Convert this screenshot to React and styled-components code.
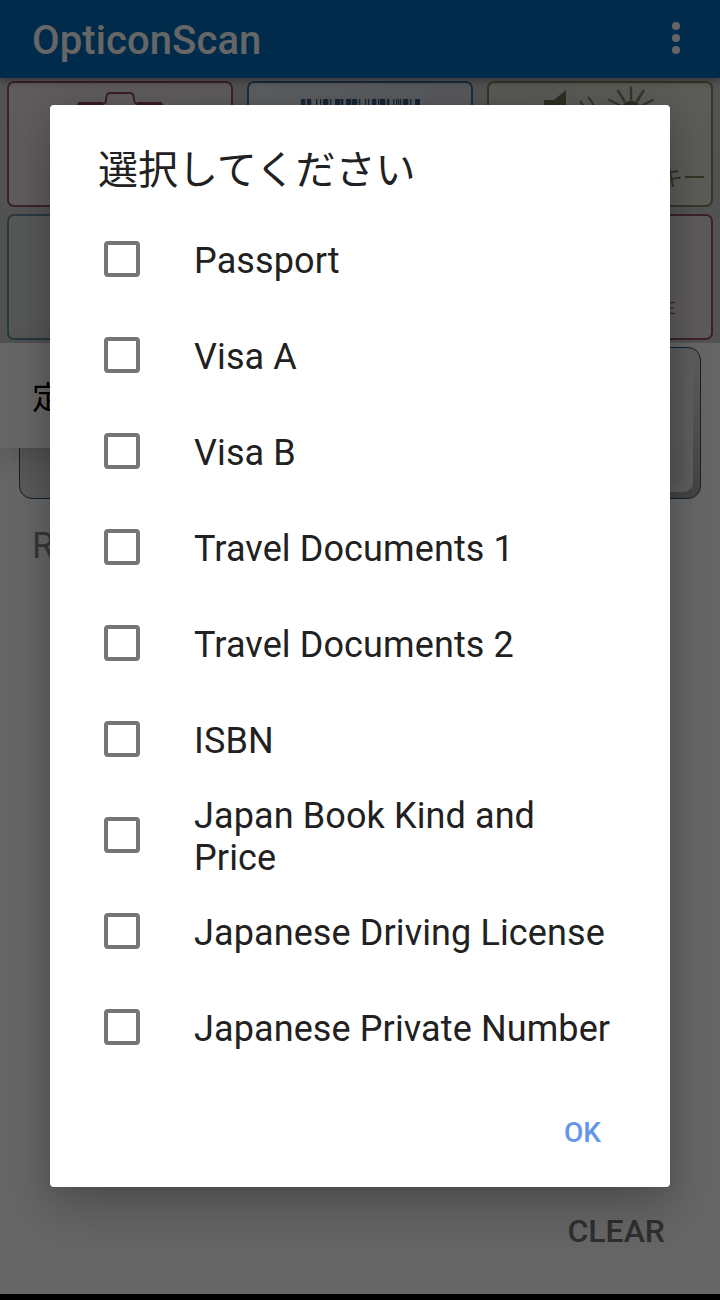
import React from 'react'
import styled, { createGlobalStyle } from 'styled-components';

const options = [
    'Passport',
    'Visa A',
    'Visa B',
    'Travel Documents 1',
    'Travel Documents 2',
    'ISBN',
    'Japan Book Kind and Price',
    'Japanese Driving License',
    'Japanese Private Number',
]

// [x, width] of the bars
const bars = [
    [0, 4], [6, 4], [15, 1], [19, 1], [22, 5], [29, 1], [34, 5], [40, 2], [45, 5], [51, 5], [58, 1],
    [64, 1], [67, 1], [71, 4], [77, 1], [79, 5], [86, 2], [92, 1], [95, 1], [97, 1], [99, 1], [102, 5], [109, 1], [114, 5],
]

function CameraIcon() {
    return (
        <svg width="90" height="60" viewBox="0 0 90 60" fill="none" stroke="#8a4a5c" strokeWidth="1.8">
            <path d="M1 50V18q0-6 5-6h22q2.500 0 2.800-3l.8-5q.5-3 4-3h19q3.500 0 4 3l.8 5q.3 3 2.800 3h22q5 0 5 6v32z" />
            <path d="M3 11.400h25M62 11.400h25" strokeWidth="2.600" />
        </svg>
    )
}

function BarcodeIcon() {
    return (
        <svg width="120" height="50" viewBox="0 0 120 50" fill="#365e85">
            {bars.map(([x, w]) => <rect key={x} x={x + 1} y="0" width={w + 0.3} height="50" />)}
        </svg>
    )
}

function SoundLightIcon() {
    return (
        <svg width="116" height="60" viewBox="0 0 116 60" fill="#6f7c58">
            <path d="M0 14h10L22 4v46L10 39H0z" />
            <g fill="none" stroke="#7e8a68" strokeWidth="2.200">
                <path d="M36 15q7 8 7 18M44 11q9 9 9 24" />
                <path d="M87 .5v14M73.500 4l7.500 12M100 4l-7.500 12M64.500 13.500L77 20M109.500 13.500L97 20" strokeWidth="2.400" />
            </g>
            <circle cx="87" cy="26" r="11" />
        </svg>
    )
}

function App() {
    return (
        <Screen>
            <GlobalStyle />
            <AppBar>
                <AppTitle>OpticonScan</AppTitle>
                <Overflow>
                    <Dot /><Dot /><Dot />
                </Overflow>
            </AppBar>
            <Tools>
                <Tile $line="#94566a" $from="#f0e6e8" $to="#eae4e5" $pad="9px"><CameraIcon /></Tile>
                <Tile $line="#4070a4" $from="#e8ebf2" $to="#d8dce4" $pad="16px"><BarcodeIcon /></Tile>
                <Tile $line="#7d8c60" $from="#dce0d6" $to="#e4e8dc" $pad="3px">
                    <IconShift><SoundLightIcon /></IconShift>
                    <TileLabel>キー</TileLabel>
                </Tile>
                <Tile $line="#6490a4" $from="#dadbdb" $to="#dadbdb" />
                <Tile $line="#94566a" $from="#eae4e5" $to="#eae4e5" />
                <Tile $line="#94566a" $from="#ece4e5" $to="#e8e2e3">
                    <SmallLabel>E</SmallLabel>
                </Tile>
            </Tools>
            <Main>
                <ScanKey><KeyFace /></ScanKey>
                <ResultLabel>Result</ResultLabel>
                <ClearButton>CLEAR</ClearButton>
            </Main>
            <Popup>定型</Popup>
            <Scrim>
                <Dialog>
                    <DialogTitle>選択してください</DialogTitle>
                    <List>
                        {options.map((option) => (
                            <Option key={option}>
                                <Box />
                                <OptionText>{option}</OptionText>
                            </Option>
                        ))}
                    </List>
                    <Actions>
                        <OkButton>OK</OkButton>
                    </Actions>
                </Dialog>
            </Scrim>
        </Screen>
    )
}

export default App

const GlobalStyle = createGlobalStyle`
body{
    margin: 0;
    background: #000;
}
*{
    box-sizing: border-box;
}
`

const Screen = styled.div`
position: relative;
display: flex;
flex-direction: column;
width: 720px;
height: 1300px;
border-bottom: 6px solid #000;
background: #fff;
overflow: hidden;
font-family: Roboto, "Noto Sans CJK JP", sans-serif;
`

const AppBar = styled.header`
position: relative;
z-index: 1;
display: flex;
flex: none;
align-items: center;
justify-content: space-between;
height: 78px;
padding: 0 40px 0 32px;
background: #006cb8;
box-shadow: 0 3px 8px rgba(0, 0, 0, 0.35);
`

const AppTitle = styled.h1`
margin: 3px 0 0;
color: #fff;
font-size: 40px;
font-weight: 500;
letter-spacing: 0.1px;
line-height: 48px;
`

const Overflow = styled.div`
display: flex;
flex-direction: column;
gap: 4px;
padding-bottom: 2px;
`

const Dot = styled.span`
width: 8px;
height: 8px;
border-radius: 50%;
background: #fff;
`

const Tools = styled.section`
display: grid;
flex: none;
grid-template-columns: repeat(3, 226px);
grid-template-rows: 126px 126px;
column-gap: 14px;
row-gap: 7px;
height: 265px;
padding: 3px 7px 0;
background: #cfcfcf;
`

const Tile = styled.div`
display: flex;
flex-direction: column;
align-items: center;
justify-content: space-between;
padding-top: ${(props) => props.$pad || '0'};
border: 2px solid ${(props) => props.$line};
border-radius: 7px;
background: linear-gradient(100deg, ${(props) => props.$from}, ${(props) => props.$to});
overflow: hidden;
`

const IconShift = styled.div`
display: flex;
padding-left: 3px;
`

const TileLabel = styled.span`
align-self: flex-end;
padding: 0 5px 12px 0;
color: #78875e;
font-family: "Noto Sans CJK JP", sans-serif;
font-size: 24px;
font-weight: 400;
letter-spacing: -0.5px;
line-height: 34px;
`

const SmallLabel = styled.span`
align-self: flex-end;
margin-top: auto;
padding: 0 36px 19px 0;
color: #94566a;
font-size: 16px;
font-weight: 400;
line-height: 20px;
`

const Main = styled.main`
display: flex;
flex: 1;
flex-direction: column;
padding: 4px 19px 0;
`

const ScanKey = styled.div`
height: 152px;
padding: 0 7px 6px 90px;
border: 1.500px solid #24507a;
border-radius: 13px;
background:
    linear-gradient(90deg, #e0e0e0 70px, transparent 110px),
    linear-gradient(#e6e6e6, #dcdcdc 30%, #a8a8a8);
`

const KeyFace = styled.div`
height: 100%;
border-radius: 10px;
background: linear-gradient(#e4e4e4, #dedede);
box-shadow: inset -9px -7px 5px rgba(240, 240, 240, 0.7);
`

const ResultLabel = styled.p`
margin: 25px 0 0 13px;
color: #8a8a8a;
font-size: 36px;
line-height: 44px;
`

const ClearButton = styled.button`
align-self: flex-end;
margin: auto 36px 40px 0;
padding: 0;
border: 0;
background: none;
color: #757575;
font-family: inherit;
font-size: 32px;
font-weight: 500;
line-height: 46px;
`

const Popup = styled.div`
position: absolute;
top: 343px;
left: 0;
width: 640px;
height: 105px;
padding: 30px 32px;
background: #fff;
box-shadow: 0 8px 30px rgba(0, 0, 0, 0.18);
color: #000;
font-size: 32px;
line-height: 50px;
`

const Scrim = styled.div`
position: absolute;
inset: 0;
z-index: 2;
display: flex;
align-items: flex-start;
justify-content: center;
padding-top: 105px;
background: rgba(0, 0, 0, 0.6);
`

const Dialog = styled.div`
display: flex;
flex-direction: column;
width: 620px;
height: 1082px;
padding: 34px 48px 0;
border-radius: 4px;
background: #fff;
box-shadow: 0 22px 50px rgba(0, 0, 0, 0.22), 0 0 26px rgba(0, 0, 0, 0.1);
color: #212121;
`

const DialogTitle = styled.h2`
margin: 0 0 16px;
font-family: "Noto Sans CJK JP", sans-serif;
font-size: 40px;
font-weight: 400;
line-height: 56px;
`

const List = styled.div`
display: flex;
flex-direction: column;
`

const Option = styled.label`
display: flex;
align-items: center;
height: 96px;
padding-left: 6px;
`

const Box = styled.span`
flex: none;
width: 36px;
height: 36px;
margin-right: 54px;
border: 4px solid #757575;
border-radius: 4px;
`

const OptionText = styled.span`
padding-top: 4px;
font-size: 36px;
letter-spacing: 0.11px;
line-height: 42px;
`

const Actions = styled.div`
display: flex;
justify-content: flex-end;
padding: 38px 21px 0 0;
`

const OkButton = styled.button`
padding: 0;
border: 0;
background: none;
color: #6495ed;
font-family: inherit;
font-size: 28px;
font-weight: 500;
line-height: 40px;
`
